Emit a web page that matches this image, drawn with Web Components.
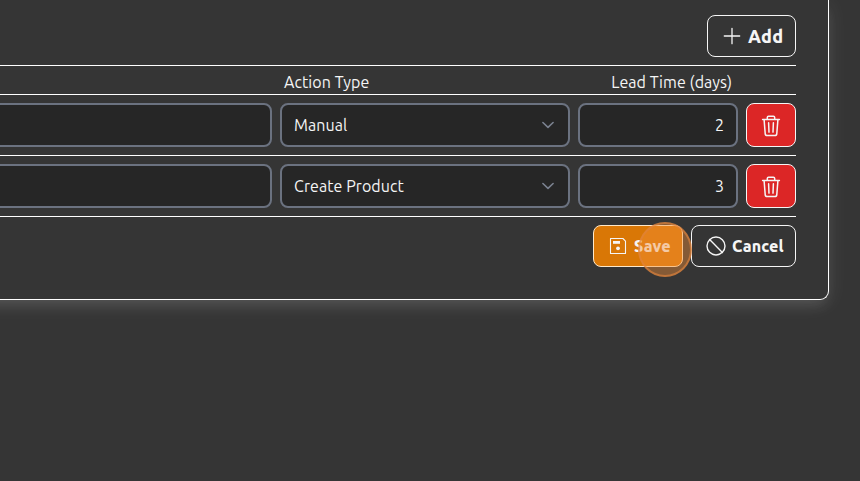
<!DOCTYPE html>
<html lang="en">
<head>
<meta charset="utf-8">
<title>Action plan</title>
<style>
html,body{margin:0;height:100%;overflow:hidden;background:#353535;color:#f5f5f5;font:16px/24px Ubuntu,"Noto Sans",sans-serif;letter-spacing:.07px}
</style>
</head>
<body>
<plan-panel>
  <ui-button slot="tools" icon="plus" style="width:89px;font-size:18px;letter-spacing:.3px">Add</ui-button>
  <plan-row head><span></span><span style="padding-left:4px">Action Type</span><span style="text-align:right;padding-right:6px">Lead Time (days)</span><span></span></plan-row>
  <plan-row><ui-field></ui-field><ui-field chevron>Manual</ui-field><ui-field number>2</ui-field><ui-button icon="trash" kind="danger"></ui-button></plan-row>
  <plan-row><ui-field></ui-field><ui-field chevron>Create Product</ui-field><ui-field number>3</ui-field><ui-button icon="trash" kind="danger"></ui-button></plan-row>
  <ui-button slot="actions" icon="save" kind="primary" style="width:90px">Save<click-marker slot="over"></click-marker></ui-button>
  <ui-button slot="actions" icon="ban" style="width:105px">Cancel</ui-button>
</plan-panel>
<script>
const define = (name, html, setup) => customElements.define(name, class extends HTMLElement {
  constructor() {
    super();
    this.attachShadow({mode: 'open'}).innerHTML = html;
    if (setup) setup(this, this.shadowRoot);
  }
});

const icons = {
  plus: '<svg width="24" height="24" viewBox="0 0 24 24" stroke-width="1.3"><path d="M12 4.3v15.4M4.3 12h15.4"/></svg>',
  trash: '<svg width="24" height="24" viewBox="0 0 24 24" stroke-width="1.5"><path d="M3.6 5.5h16.8M8.3 5.2V3.6Q8.3 2.3 9.6 2.3h4.8q1.3 0 1.3 1.3v1.6M5.1 5.7l1.1 13.9q.1 1.9 2 1.9h7.6q1.9 0 2-1.9l1.1-13.9M9.6 8.8l.4 9.3M14.4 8.8l-.4 9.3"/></svg>',
  save: '<svg width="24" height="24" viewBox="0 0 24 24" stroke-width="1.1"><path d="M4.5 4.5h12.4l2.6 2.6v12.4h-15z"/><path d="M7 7h7v2.8H7z" fill="currentColor" stroke="none"/><circle cx="12" cy="14.3" r="1.9" fill="currentColor" stroke="none"/></svg>',
  ban: '<svg width="24" height="24" viewBox="0 0 24 24" stroke-width="1.4"><circle cx="12" cy="12" r="9"/><path d="M5.6 5.6l12.8 12.8"/></svg>'
};

define('plan-panel', `
<style>
:host{display:flex;flex-direction:column;box-sizing:border-box;width:869px;height:300px;margin-left:-40px;padding:15px 32px 0 0;border:solid #fff;border-width:0 1px 1px 0;border-radius:0 0 9px 0;background:#353535;box-shadow:0 8px 14px -3px rgba(255,255,255,.1),0 4px 22px rgba(255,255,255,.09)}
.tools{display:flex;justify-content:flex-end;padding-bottom:8px;border-bottom:1px solid #fff}
.actions{display:flex;justify-content:flex-end;gap:8px;padding-top:8px}
</style>
<div class="tools"><slot name="tools"></slot></div>
<div><slot></slot></div>
<div class="actions"><slot name="actions"></slot></div>`);

define('plan-row', `
<style>
:host{display:grid;grid-template-columns:312px 290px 160px 50px;column-gap:8px;padding:8px 0;border-bottom:1px solid #fff}
:host([head]){padding:4px 0 0}
</style><slot></slot>`);

define('ui-field', `
<style>
:host{display:flex;align-items:center;justify-content:space-between;box-sizing:border-box;height:44px;padding:0 12px;border:2px solid #6b7280;border-radius:8px;background:#262626}
:host([number]){justify-content:flex-end}
svg{display:none;margin-right:1px}
:host([chevron]) svg{display:block}
</style><span><slot></slot></span>
<svg width="14" height="8" viewBox="0 0 14 8" fill="none" stroke="#7b8290" stroke-width="1.6" stroke-linecap="round" stroke-linejoin="round"><path d="M1.9 1.5L7 6.4l5.1-4.9"/></svg>`);

define('ui-button', `
<style>
:host{position:relative;display:flex;align-items:center;gap:4px;box-sizing:border-box;height:42px;padding:0 12px;border:1px solid #f5f5f5;border-radius:8px;font-weight:800;letter-spacing:.15px}
:host([kind=danger]){height:44px;padding-top:1px;background:#dc2626}
:host([kind=danger]) .label{display:none}
:host([kind=primary]){background:#d97706;border-color:#ffe8c8}
.icon{display:flex}
svg{display:block;fill:none;stroke:currentColor;stroke-linecap:round;stroke-linejoin:round}
</style><span class="icon"></span><span class="label"><slot></slot></span><slot name="over"></slot>`,
(host, root) => { root.querySelector('.icon').innerHTML = icons[host.getAttribute('icon')]; });

define('click-marker', `
<style>
:host{position:absolute;z-index:1;left:43.5px;top:-4px;box-sizing:border-box;width:54px;height:55px;border:2px solid rgba(222,130,62,.65);border-radius:50%;background:rgba(243,144,58,.42)}
</style>`);
</script>
</body>
</html>
